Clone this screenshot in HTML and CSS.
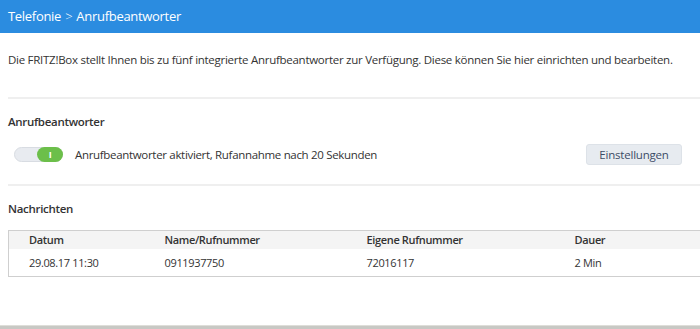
FILE: index.html
```html
<!DOCTYPE html>
<html lang="de">
<head>
    <meta charset="UTF-8">
    <title>Telefonie - Anrufbeantworter</title>
    <link rel="stylesheet" href="styles.css">
</head>
<body>
    <div class="page">
        <div class="titlebar">Telefonie <span class="sep">&gt;</span> Anrufbeantworter</div>

        <div class="content">
            <p class="intro">Die FRITZ!Box stellt Ihnen bis zu fünf integrierte Anrufbeantworter zur Verfügung. Diese können Sie hier einrichten und bearbeiten.</p>

            <div class="section">
                <h3>Anrufbeantworter</h3>
                <div class="tam-row">
                    <span class="toggle on"><span class="knob">I</span></span>
                    <span class="tam-text">Anrufbeantworter aktiviert, Rufannahme nach 20 Sekunden</span>
                    <button class="btn">Einstellungen</button>
                </div>
            </div>

            <div class="section">
                <h3>Nachrichten</h3>
                <table class="msgs">
                    <thead>
                        <tr>
                            <th class="c1">Datum</th>
                            <th class="c2">Name/Rufnummer</th>
                            <th class="c3">Eigene Rufnummer</th>
                            <th class="c4">Dauer</th>
                        </tr>
                    </thead>
                    <tbody>
                        <tr>
                            <td>29.08.17 11:30</td>
                            <td>0911937750</td>
                            <td>72016117</td>
                            <td>2 Min</td>
                        </tr>
                    </tbody>
                </table>
            </div>
        </div>
    </div>
    <div class="footer"></div>
</body>
</html>
```

FILE: styles.css
```css
* {
    margin: 0;
    padding: 0;
    box-sizing: border-box;
}

body {
    font-family: "Open Sans", "Noto Sans", sans-serif;
    font-size: 11.5px;
    letter-spacing: -0.27px;
    color: #333;
    background: #fff;
    width: 700px;
    height: 329px;
    overflow: hidden;
    display: flex;
    flex-direction: column;
}

.page {
    flex: 1;
}

.titlebar {
    background: #2b8ce0;
    color: #fff;
    height: 33px;
    line-height: 32px;
    padding-left: 8px;
    font-size: 13px;
    letter-spacing: -0.3px;
}

.titlebar .sep {
    font-weight: 300;
    margin: 0 1px;
}

.content {
    padding-left: 8px;
}

.intro {
    padding-top: 18px;
    height: 64px;
    line-height: 17px;
}

.section {
    border-top: 2px solid #efefef;
    padding-top: 15px;
}

h3 {
    font-size: 11.5px;
    font-weight: 600;
    letter-spacing: -0.3px;
    line-height: 16px;
    margin-bottom: 11px;
}

.tam-row {
    display: flex;
    align-items: center;
    height: 26px;
    margin-bottom: 17px;
    padding-right: 18px;
}

.toggle {
    width: 49px;
    height: 15px;
    border-radius: 8px;
    background: #e8ebf0;
    border: 1px solid #d8dce2;
    margin-left: 6px;
    position: relative;
}

.toggle .knob {
    position: absolute;
    right: -1px;
    top: -1px;
    width: 26px;
    height: 15px;
    border-radius: 8px;
    background: #6cbf4a;
    color: #fff;
    font-size: 9px;
    font-weight: bold;
    line-height: 15px;
    text-align: center;
}

.tam-text {
    margin-left: 12px;
    flex: 1;
    letter-spacing: -0.32px;
}

.btn {
    font-family: inherit;
    font-size: 11.5px;
    letter-spacing: -0.2px;
    color: #3c4b66;
    background: #e7ebf0;
    border: 1px solid #dde2e8;
    border-radius: 3px;
    width: 96px;
    height: 21px;
}

.msgs {
    width: 100%;
    border-collapse: collapse;
    border-top: 1px solid #cfcfcf;
    border-bottom: 1px solid #cfcfcf;
    border-left: 1px solid #cfcfcf;
    margin-top: 13px;
    font-size: 11px;
    letter-spacing: -0.35px;
}

.msgs th {
    text-align: left;
    font-weight: 600;
    background: #f4f4f4;
    height: 18px;
}

.msgs td {
    height: 28px;
}

.msgs th, .msgs td {
    padding: 0;
}

.msgs .c1 { padding-left: 20px; width: 156px; }
.msgs td:first-child { padding-left: 20px; }
.msgs .c2 { width: 202px; }
.msgs .c3 { width: 208px; }

.footer {
    height: 4px;
    background: #c8c8c4;
    border-top: 1px solid #deded9;
}
```
